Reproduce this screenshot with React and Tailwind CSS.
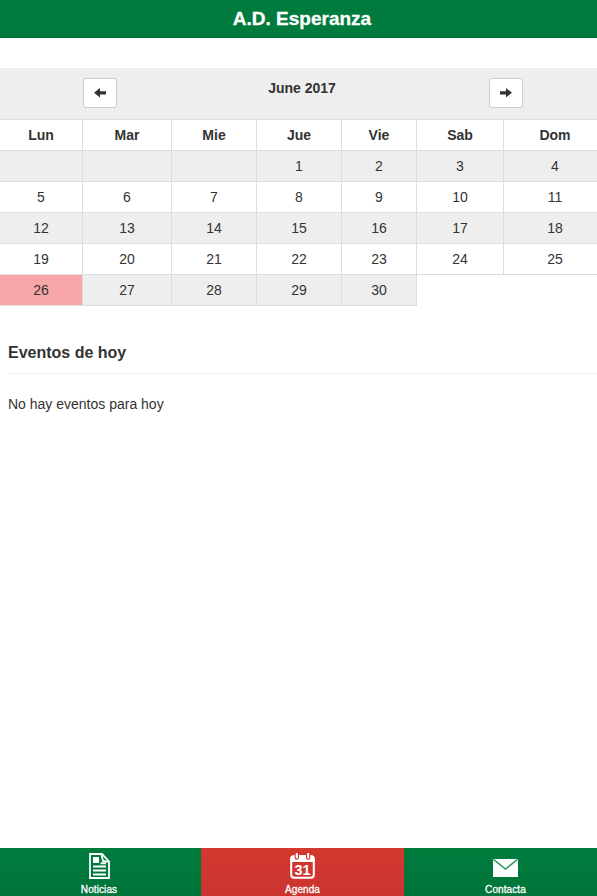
const days = [
  { label: 'Lun', width: 'w-[83px]' },
  { label: 'Mar', width: 'w-[89px]' },
  { label: 'Mie', width: 'w-[85px]' },
  { label: 'Jue', width: 'w-[85px]' },
  { label: 'Vie', width: 'w-[75px]' },
  { label: 'Sab', width: 'w-[87px]' },
  { label: 'Dom', width: 'w-[103px]' },
]

const weeks = [
  ['', '', '', 1, 2, 3, 4],
  [5, 6, 7, 8, 9, 10, 11],
  [12, 13, 14, 15, 16, 17, 18],
  [19, 20, 21, 22, 23, 24, 25],
  [26, 27, 28, 29, 30],
]

const today = 26

function ArrowButton({ label, flip }) {
  return (
    <button
      aria-label={label}
      className="flex h-[30px] w-[34px] items-center justify-center rounded-[3px] border border-[#ccc] bg-white"
    >
      <svg width="12" height="10" viewBox="0 0 12 10" className={flip ? '-scale-x-100' : ''}>
        <path d="M0 4.7 6 0v3.2h6v3.2H6v3.2z" fill="#333" />
      </svg>
    </button>
  )
}

function Calendar() {
  return (
    <section className="mt-[30px]">
      <div className="grid h-[52px] grid-cols-[200px_204px_204px] justify-items-center border-b border-[#ddd] bg-[#eee] pt-[10px]">
        <ArrowButton label="Mes anterior" />
        <h2 className="text-[14px] leading-5 font-bold">June 2017</h2>
        <ArrowButton label="Mes siguiente" flip />
      </div>
      <table className="w-[607px] table-fixed border-separate border-spacing-0 text-center text-[14px] leading-5">
        <thead>
          <tr className="h-[31px]">
            {days.map((day) => (
              <th key={day.label} className={`border-r border-b border-[#ddd] p-0 ${day.width}`}>
                {day.label}
              </th>
            ))}
          </tr>
        </thead>
        <tbody>
          {weeks.map((week, i) => (
            <tr key={i} className="h-[31px]">
              {week.map((day, j) => (
                <td
                  key={j}
                  className={`border-r border-b border-[#ddd] p-0 ${
                    day === today ? 'bg-[#f8a5a8]' : i % 2 === 0 ? 'bg-[#eee]' : 'bg-white'
                  }`}
                >
                  {day}
                </td>
              ))}
            </tr>
          ))}
        </tbody>
      </table>
    </section>
  )
}

function NewsIcon() {
  return (
    <svg width="21" height="26" viewBox="0 0 21 26" fill="none" stroke="#fff">
      <path d="M1 1h12l7 7.5V25H1z" strokeWidth="1.8" />
      <path d="M12.5 1.5 14 8l6 .8" strokeWidth="1.8" />
      <path d="M4 4h6v6H4z" fill="#fff" stroke="none" />
      <path d="M11.5 10.3H17M4 13.5h13M4 17.5h13M4 21.5h13" strokeWidth="1.9" />
    </svg>
  )
}

function AgendaIcon() {
  return (
    <svg width="25" height="26" viewBox="0 0 25 26">
      <rect x="1.2" y="3.2" width="22.6" height="21.6" rx="3" fill="none" stroke="#fff" strokeWidth="2" />
      <path d="M.5 9V5Q.5 2.2 4 2.2h17q3.5 0 3.5 2.8v4z" fill="#fff" />
      <path d="M6.8 0v4.5M18.2 0v4.5" stroke="#d23630" strokeWidth="4.4" strokeLinecap="round" />
      <path d="M6.8 1v3.5M18.2 1v3.5" stroke="#fff" strokeWidth="2.2" strokeLinecap="round" />
      <text
        x="12.5"
        y="21.6"
        textAnchor="middle"
        fontSize="14.5"
        fontWeight="700"
        fontFamily="Liberation Sans, sans-serif"
        fill="#fff"
      >
        31
      </text>
    </svg>
  )
}

function MailIcon() {
  return (
    <svg width="25" height="18" viewBox="0 0 25 18">
      <path d="M0 0h25v18H0z" fill="#fff" />
      <path d="m.5.5 12 9.5 12-9.5" fill="none" stroke="#2f9160" strokeWidth="1.5" />
    </svg>
  )
}

const tabs = [
  { label: 'Noticias', icon: <NewsIcon />, style: 'w-[201px] bg-linear-to-b from-[#007c3d] to-[#00743a] pr-[3px]', space: 'pt-[5px]' },
  { label: 'Agenda', icon: <AgendaIcon />, style: 'w-[203px] bg-linear-to-b from-[#d4382f] to-[#ca3430]', space: 'pt-[5px]' },
  { label: 'Contacta', icon: <MailIcon />, style: 'w-[203px] bg-linear-to-b from-[#007c3d] to-[#00743a]', space: 'pt-[11px]' },
]

function App() {
  return (
    <div className="h-screen w-full overflow-hidden bg-white font-['Liberation_Sans',sans-serif] text-[#333]">
      <div className="flex h-full w-[607px] flex-col">
        <header className="h-[38px] border-b-2 border-[#007338] bg-[#007a3d] pt-px pr-[3px] text-center">
          <h1 className="text-[19px] leading-[35px] font-bold text-white [-webkit-text-stroke:0.3px_white]">A.D. Esperanza</h1>
        </header>

        <Calendar />

        <section className="ml-2 flex-1 pt-[37px]">
          <h3 className="border-b border-[#eee] pb-[10px] text-[16px] leading-5 font-bold">Eventos de hoy</h3>
          <p className="pt-5 text-[14px] leading-5">No hay eventos para hoy</p>
        </section>

        <nav className="flex h-12 shrink-0 text-[10px] text-white">
          {tabs.map((tab) => (
            <a key={tab.label} className={`flex flex-col items-center ${tab.style}`}>
              <div className={`h-9 ${tab.space}`}>{tab.icon}</div>
              <span className="leading-3 tracking-[0.1px] [-webkit-text-stroke:0.3px_white]">{tab.label}</span>
            </a>
          ))}
        </nav>
      </div>
    </div>
  )
}

export default App
